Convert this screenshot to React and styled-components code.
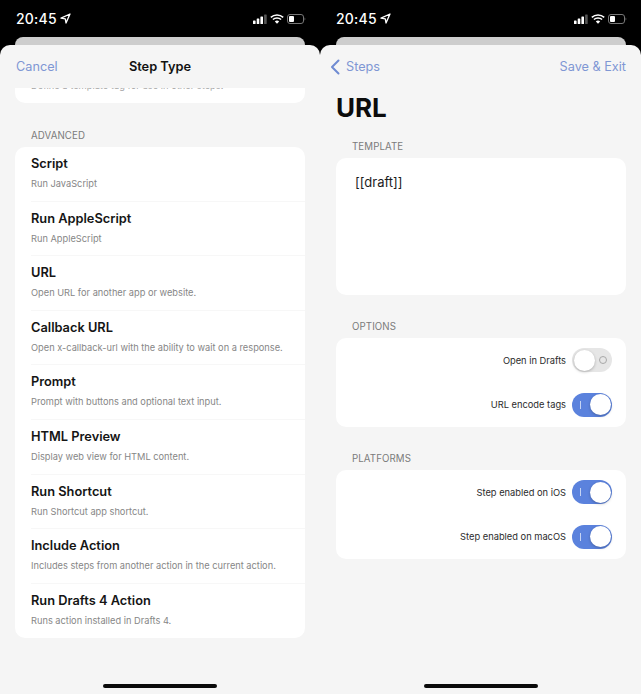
import styled, { createGlobalStyle } from 'styled-components'

const GlobalStyle = createGlobalStyle`
  * {
    box-sizing: border-box;
    margin: 0;
    padding: 0;
  }

  html, body {
    width: 641px;
    height: 694px;
    overflow: hidden;
    background: #000;
    font-family: Inter, "Liberation Sans", sans-serif;
  }
`

const Page = styled.div`
  width: 641px;
  height: 694px;
  display: flex;
  background: #000;
`

const Phone = styled.div`
  width: ${(p) => p.$width}px;
  height: 694px;
  display: flex;
  flex-direction: column;
  flex: none;
`

const StatusBar = styled.div`
  height: 37px;
  flex: none;
  padding: 0 14px 0 16px;
  display: flex;
  align-items: center;
  justify-content: space-between;
  color: #fff;
`

const TimeGroup = styled.div`
  display: flex;
  align-items: center;
  gap: 3px;
  font-size: 14px;
  font-weight: 500;
  letter-spacing: 0.2px;
`

const StatusIcons = styled.div`
  display: flex;
  align-items: center;
  gap: 3px;
`

const BackCard = styled.div`
  height: 8px;
  flex: none;
  margin: 0 15px 0 ${(p) => p.$left}px;
  background: #cdcdcd;
  border-radius: 8px 8px 0 0;
`

const Sheet = styled.div`
  flex: 1;
  min-height: 0;
  position: relative;
  display: flex;
  flex-direction: column;
  background: #f5f5f5;
  border-radius: 10px 10px 0 0;
  overflow: hidden;
`

const NavBar = styled.div`
  height: 43px;
  flex: none;
  padding: 0 15px 0 ${(p) => p.$left}px;
  display: flex;
  align-items: center;
  justify-content: space-between;
  position: relative;
`

const NavLink = styled.span`
  display: flex;
  align-items: center;
  gap: 6px;
  font-size: 12.7px;
  color: #7f97d4;
`

const NavBack = styled(NavLink)`
  margin-left: -6px;
`

const NavTitle = styled.span`
  position: absolute;
  left: 0;
  right: 0;
  text-align: center;
  font-size: 12.8px;
  font-weight: 600;
  color: #111;
`

const Content = styled.div`
  flex: 1;
  padding: 0 15px 0 ${(p) => p.$left}px;
  display: flex;
  flex-direction: column;
`

const Card = styled.div`
  background: #fff;
  border-radius: 10px;
  overflow: hidden;
`

const ClippedCard = styled(Card)`
  height: 15px;
  border-radius: 0 0 10px 10px;
  padding-left: 16px;
  font-size: 9.3px;
  line-height: 12px;
  color: #a5a5a5;
`

const ClippedText = styled.div`
  margin-top: -8px;
`

const SectionLabel = styled.div`
  height: 12px;
  margin: ${(p) => p.$top}px 0 5px 16px;
  font-size: 9.7px;
  line-height: 12px;
  color: #7b7b7b;
  letter-spacing: 0.1px;
`

const StepRow = styled.div`
  height: 54.6px;
  padding: 8px 0 0 16px;
  display: flex;
  flex-direction: column;
`

const StepInner = styled.div`
  flex: 1;
  display: flex;
  flex-direction: column;
`

const Divider = styled.div`
  height: 1px;
  background: #f7f7f7;
`

const StepTitle = styled.div`
  font-size: 12.8px;
  line-height: 18px;
  font-weight: 600;
  color: #151515;
`

const StepDesc = styled.div`
  margin-top: 5px;
  font-size: 9.25px;
  line-height: 12px;
  color: #868686;
`

const PageTitle = styled.h1`
  margin: 3px 0 17px;
  height: 33px;
  font-size: 26px;
  line-height: 33px;
  font-weight: 700;
  color: #0c0c0c;
`

const TemplateCard = styled(Card)`
  height: 137px;
  padding: 15px 19px;
  font-size: 13px;
  line-height: 18px;
  color: #1c1c1c;
`

const OptionRow = styled.div`
  height: 44.5px;
  padding: 0 14px 0 0;
  display: flex;
  align-items: center;
  justify-content: flex-end;
  gap: 6px;
  font-size: 9.3px;
  color: #2b2b2b;
`

const Switch = styled.div`
  width: 40px;
  height: 24px;
  flex: none;
  position: relative;
  display: flex;
  align-items: center;
  justify-content: ${(p) => (p.$on ? 'flex-start' : 'flex-end')};
  padding: 0 ${(p) => (p.$on ? 8 : 5)}px;
  border-radius: 12px;
  background: ${(p) => (p.$on ? '#5b82dd' : '#e6e6e6')};
`

const Knob = styled.div`
  position: absolute;
  top: 1.5px;
  left: ${(p) => (p.$on ? 17.5 : 1.5)}px;
  width: 21px;
  height: 21px;
  border-radius: 50%;
  background: #fff;
  box-shadow: 0 1px 3px rgba(0, 0, 0, 0.25);
`

const OnMark = styled.div`
  width: 1px;
  height: 8px;
  background: #c6d4f3;
`

const OffMark = styled.div`
  width: 8px;
  height: 8px;
  border-radius: 50%;
  border: 1px solid #a8a8a8;
`

const HomeBar = styled.div`
  position: absolute;
  left: 50%;
  bottom: 6px;
  width: 114px;
  height: 4px;
  margin-left: -57px;
  border-radius: 2px;
  background: #0a0a0a;
`

const steps = [
  ['Script', 'Run JavaScript'],
  ['Run AppleScript', 'Run AppleScript'],
  ['URL', 'Open URL for another app or website.'],
  ['Callback URL', 'Open x-callback-url with the ability to wait on a response.'],
  ['Prompt', 'Prompt with buttons and optional text input.'],
  ['HTML Preview', 'Display web view for HTML content.'],
  ['Run Shortcut', 'Run Shortcut app shortcut.'],
  ['Include Action', 'Includes steps from another action in the current action.'],
  ['Run Drafts 4 Action', 'Runs action installed in Drafts 4.'],
]

function Status() {
  return (
    <StatusBar>
      <TimeGroup>
        20:45
        <svg width="11" height="11" viewBox="0 0 11 11">
          <path d="M10 1 1 5.2l4.3.6.7 4.2z" fill="none" stroke="#fff" strokeWidth="1.3" strokeLinejoin="round" />
        </svg>
      </TimeGroup>
      <StatusIcons>
        <svg width="14" height="10" viewBox="0 0 14 10">
          <rect x="0" y="6.5" width="2.6" height="3.5" rx="0.6" fill="#fff" />
          <rect x="3.7" y="4.5" width="2.6" height="5.5" rx="0.6" fill="#fff" />
          <rect x="7.4" y="2.5" width="2.6" height="7.5" rx="0.6" fill="#fff" />
          <rect x="11.1" y="0.5" width="2.6" height="9.5" rx="0.6" fill="#555" />
        </svg>
        <svg width="14" height="10" viewBox="0 0 14 10">
          <path d="M.8 3.4a9 9 0 0 1 12.4 0M2.9 5.5a6 6 0 0 1 8.2 0" fill="none" stroke="#fff" strokeWidth="1.5" />
          <path d="M7 9.8 4.8 7.5a3.2 3.2 0 0 1 4.4 0z" fill="#fff" />
        </svg>
        <svg width="19" height="10" viewBox="0 0 19 10">
          <rect x="0.5" y="0.5" width="16" height="9" rx="2.5" fill="none" stroke="#777" />
          <rect x="2" y="2" width="5" height="6" rx="1" fill="#fff" />
          <path d="M17.6 3.4c.9.3.9 2.9 0 3.2z" fill="#777" />
        </svg>
      </StatusIcons>
    </StatusBar>
  )
}

function Toggle({ on }) {
  return (
    <Switch $on={on}>
      {on ? <OnMark /> : <OffMark />}
      <Knob $on={on} />
    </Switch>
  )
}

function App() {
  return (
    <>
      <GlobalStyle />
      <Page>
        <Phone $width={320}>
          <Status />
          <BackCard $left={15} />
          <Sheet>
            <NavBar $left={16}>
              <NavLink>Cancel</NavLink>
              <NavTitle>Step Type</NavTitle>
            </NavBar>
            <Content $left={15}>
              <ClippedCard>
                <ClippedText>Define a template tag for use in other steps.</ClippedText>
              </ClippedCard>
              <SectionLabel $top={27}>ADVANCED</SectionLabel>
              <Card>
                {steps.map(([title, desc], i) => (
                  <StepRow key={title}>
                    <StepInner>
                      <StepTitle>{title}</StepTitle>
                      <StepDesc>{desc}</StepDesc>
                    </StepInner>
                    {i < steps.length - 1 && <Divider />}
                  </StepRow>
                ))}
              </Card>
            </Content>
            <HomeBar />
          </Sheet>
        </Phone>
        <Phone $width={321}>
          <Status />
          <BackCard $left={16} />
          <Sheet>
            <NavBar $left={16}>
              <NavBack>
                <svg width="10" height="16" viewBox="0 0 10 16">
                  <path d="M8.5 1.5 2 8l6.5 6.5" fill="none" stroke="#6f8bd2" strokeWidth="2" strokeLinecap="round" strokeLinejoin="round" />
                </svg>
                Steps
              </NavBack>
              <NavLink>Save &amp; Exit</NavLink>
            </NavBar>
            <Content $left={16}>
              <PageTitle>URL</PageTitle>
              <SectionLabel $top={0}>TEMPLATE</SectionLabel>
              <TemplateCard>[[draft]]</TemplateCard>
              <SectionLabel $top={26}>OPTIONS</SectionLabel>
              <Card>
                <OptionRow>
                  Open in Drafts
                  <Toggle />
                </OptionRow>
                <OptionRow>
                  URL encode tags
                  <Toggle on />
                </OptionRow>
              </Card>
              <SectionLabel $top={26}>PLATFORMS</SectionLabel>
              <Card>
                <OptionRow>
                  Step enabled on iOS
                  <Toggle on />
                </OptionRow>
                <OptionRow>
                  Step enabled on macOS
                  <Toggle on />
                </OptionRow>
              </Card>
            </Content>
            <HomeBar />
          </Sheet>
        </Phone>
      </Page>
    </>
  )
}

export default App
